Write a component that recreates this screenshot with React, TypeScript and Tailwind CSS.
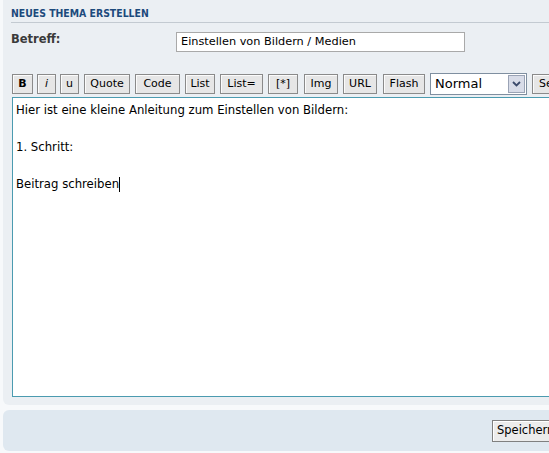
import React from 'react'

const font = { fontFamily: '"DejaVu Sans", Tahoma, sans-serif' }
const condensed = { fontFamily: '"DejaVu Sans Condensed", "DejaVu Sans", sans-serif' }

const buttons = [
  { label: 'B', cls: 'w-[21px] ml-0 font-bold' },
  { label: 'i', cls: 'w-[19px] ml-[4px] italic' },
  { label: 'u', cls: 'w-[19px] ml-[4px]' },
  { label: 'Quote', cls: 'w-[46px] ml-[5px]' },
  { label: 'Code', cls: 'w-[45px] ml-[5px]' },
  { label: 'List', cls: 'w-[30px] ml-[5px]' },
  { label: 'List=', cls: 'w-[43px] ml-[5px]' },
  { label: '[*]', cls: 'w-[30px] ml-[5px]' },
  { label: 'Img', cls: 'w-[34px] ml-[6px]' },
  { label: 'URL', cls: 'w-[34px] ml-[5px]' },
  { label: 'Flash', cls: 'w-[42px] ml-[6px]' },
]

function ToolButton({ label, cls }: { label: string; cls: string }) {
  return (
    <div
      className={`${cls} h-[20px] shrink-0 flex items-center justify-center border border-[#8a8a8a] bg-[#e6e6e6] text-[11px] text-black shadow-[inset_1px_1px_0_#fbfbfb]`}
    >
      {label}
    </div>
  )
}

export default function App() {
  return (
    <div className="w-[549px] h-[453px] overflow-hidden bg-[#f7f9fb]" style={font}>
      <div className="w-[760px] ml-[3px] rounded-b-[6px] bg-[#ebeff3] pt-[8px] pb-[8px]">
        <div className="ml-[8px] text-[10.4px] font-bold leading-[11px] text-[#1c4a7c]" style={condensed}>
          NEUES THEMA ERSTELLEN
        </div>
        <div className="ml-[8px] mt-[3px] h-px bg-[#c3cad1]" />

        <div className="flex h-[20px] mt-[9px] items-center">
          <div className="ml-[8px] w-[165px] -mt-[5px] text-[11.5px] font-bold text-[#3a3a3a]">Betreff:</div>
          <div className="w-[289px] h-[20px] flex items-center border border-[#a9a9a9] bg-white pl-[4px] text-[11.3px] text-black">
            Einstellen von Bildern / Medien
          </div>
        </div>

        <div className="flex items-center ml-[9px] mt-[21px] h-[22px]">
          {buttons.map((b, index) => (
            <ToolButton key={index} label={b.label} cls={b.cls} />
          ))}
          <div className="ml-[5px] w-[97px] h-[22px] shrink-0 flex items-center justify-between border border-[#7f8fa0] bg-white pl-[4px] pr-[1px]">
            <span className="text-[13px] text-black">Normal</span>
            <div className="w-[17px] h-[18px] flex items-center justify-center border border-[#9aa3b5] bg-[#d8dce8]">
              <svg width="9" height="6" viewBox="0 0 9 6">
                <path d="M1 1 L4.5 4.5 L8 1" stroke="#3b4a6b" strokeWidth="1.8" fill="none" />
              </svg>
            </div>
          </div>
          <ToolButton label="Senden" cls="w-[60px] ml-[5px] justify-start pl-[6px]" />
        </div>

        <div className="ml-[9px] mt-[2px] h-[300px] border border-[#4b9bb0] bg-white px-[3px] pt-[3px] text-[11.7px] leading-[18.5px] text-black">
          <div>Hier ist eine kleine Anleitung zum Einstellen von Bildern:</div>
          <div>&nbsp;</div>
          <div>1. Schritt:</div>
          <div>&nbsp;</div>
          <div className="flex items-center">
            Beitrag schreiben<span className="inline-block w-px h-[15px] bg-black" />
          </div>
        </div>
      </div>

      <div className="w-[760px] ml-[3px] mt-[5px] h-[41px] rounded-[6px] bg-[#dfe8f0] flex items-center pl-[489px]">
        <div className="w-[80px] h-[22px] flex items-center pl-[4px] border border-[#808080] bg-[#ececec] text-[11.5px] text-black shadow-[inset_1px_1px_0_#ffffff]">
          Speichern
        </div>
      </div>
    </div>
  )
}
